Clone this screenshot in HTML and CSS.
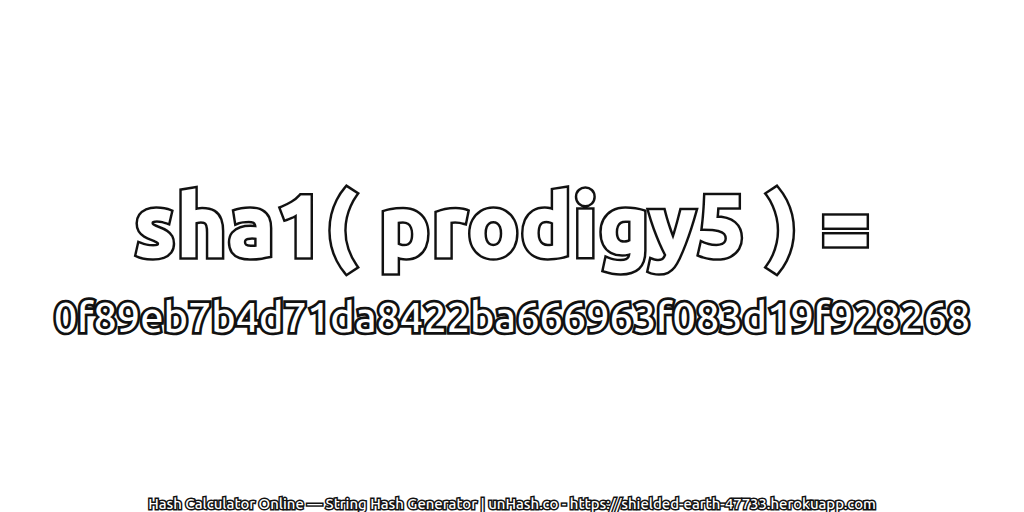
FILE: index.html
```html
<!DOCTYPE html>
<html lang="en">
<head>
<meta charset="utf-8">
<title>sha1( prodigy5 )</title>
<link rel="stylesheet" href="styles.css">
</head>
<body>
<main class="page">
  <div class="center">
    <h1 class="title outlined" data-text="sha1( prodigy5 ) =">sha1( prodigy5 ) =</h1>
    <p class="hash">0f89eb7b4d71da8422ba666963f083d19f928268</p>
  </div>
  <footer class="foot">Hash Calculator Online — String Hash Generator | unHash.co - https://shielded-earth-47733.herokuapp.com</footer>
</main>
</body>
</html>
```
FILE: styles.css
```css
html, body { margin: 0; padding: 0; background: #fff; }
.page { width: 1024px; height: 512px; display: flex; flex-direction: column; align-items: center; overflow: hidden; font-family: "Ubuntu", "Noto Sans", sans-serif; }
.center { flex: 1; display: flex; flex-direction: column; justify-content: center; align-items: center; padding-top: 17px; }
.title, .hash { margin: 0; white-space: nowrap; }
.title { position: relative; margin-right: 18px; margin-bottom: 20px; font-size: 85px; line-height: 100px; font-weight: 700; color: #111; -webkit-text-stroke: 7.5px #111; letter-spacing: 1.8px; }
.title::after { content: attr(data-text); position: absolute; left: 0; top: 0; color: #fff; -webkit-text-stroke: 2.5px #fff; }
.hash { font-size: 41.4px; line-height: 44px; font-weight: 500; color: #fff; -webkit-text-stroke: 5.5px #111; paint-order: stroke fill; }
.foot { font-size: 14.9px; line-height: 16px; color: #fff; -webkit-text-stroke: 3px #111; paint-order: stroke fill; white-space: nowrap; font-weight: 500; }
```
